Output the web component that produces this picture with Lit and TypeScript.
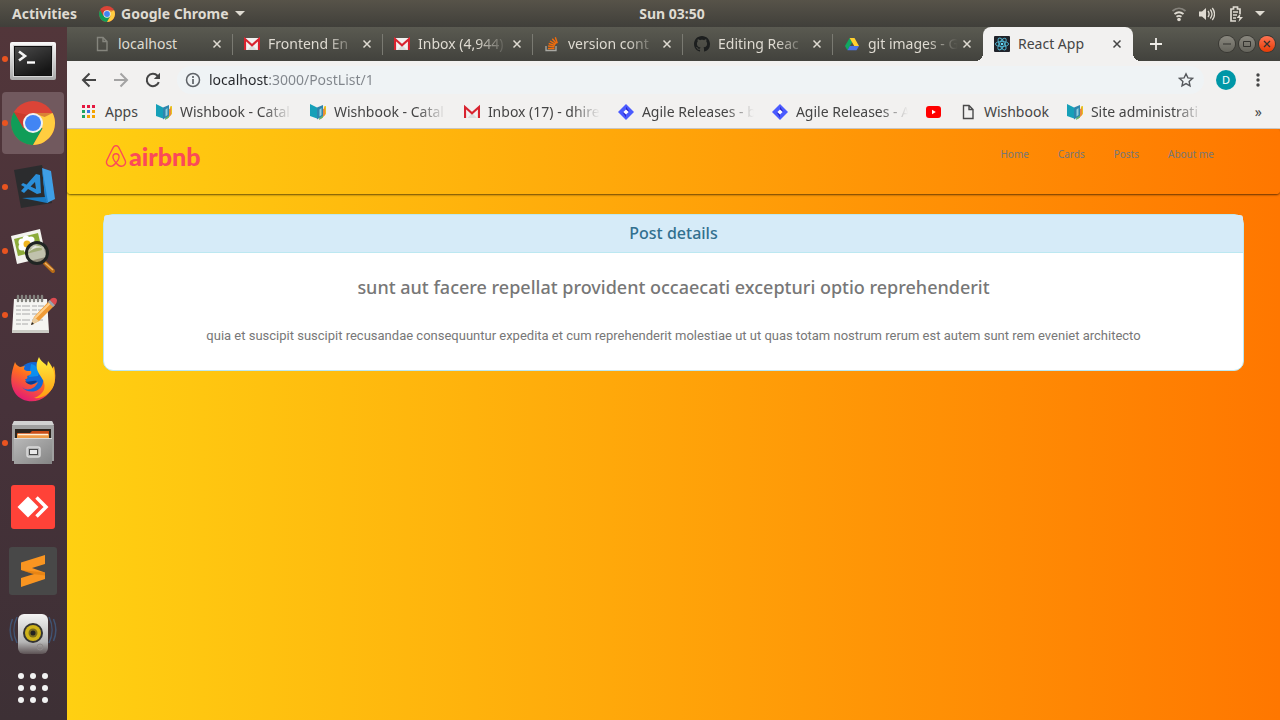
import { LitElement, html, css, svg } from "lit";
import { customElement } from "lit/decorators.js";
import { classMap } from "lit/directives/class-map.js";

const gmail = svg`<svg class="i16" viewBox="0 0 16 16"><rect x="1" y="2" width="14" height="12" rx="1" fill="#f1f1f1"/><path d="M3.500 14 8 9l5 5z" fill="#dcdcdc"/><path d="M1 14V3l7 6.200L15 3v11" fill="none" stroke="#d8232f" stroke-width="2.200"/></svg>`;
const page = (color: string) => svg`<svg class="i16" viewBox="0 0 16 16"><path d="M3.500 1.500h5.500l4 4v9H3.500zM9 1.500v4h4" fill="none" stroke="${color}" stroke-width="1.400"/></svg>`;
const stack = svg`<svg class="i16" viewBox="0 0 16 16"><path d="M2 10v4.500h10V10" fill="none" stroke="#a9a9a3" stroke-width="1.300"/><path d="M4 12.500h6.500M4.100 10l6.400.7M4.700 7.500l6.200 1.900M6 5l5.600 3.300M8.300 2.700l4.100 4.800M11.300 1.200l2 6" stroke="#f26d0c" stroke-width="1.400"/></svg>`;
const github = svg`<svg class="i16" viewBox="0 0 16 16"><path fill="#1d1f1f" d="M8 0C3.580 0 0 3.580 0 8c0 3.540 2.290 6.530 5.470 7.590.4.070.55-.17.55-.38 0-.19-.01-.82-.01-1.490-2.010.37-2.530-.49-2.690-.94-.09-.23-.48-.94-.82-1.130-.28-.15-.68-.52-.01-.53.63-.01 1.080.58 1.230.82.72 1.210 1.870.87 2.330.66.07-.52.28-.87.51-1.070-1.780-.2-3.640-.89-3.640-3.950 0-.87.31-1.590.82-2.150-.08-.2-.36-1.020.08-2.120 0 0 .67-.21 2.200.82.64-.18 1.320-.27 2-.27s1.360.09 2 .27c1.530-1.040 2.200-.82 2.200-.82.44 1.100.16 1.920.08 2.120.51.56.82 1.270.82 2.150 0 3.070-1.870 3.750-3.650 3.950.29.25.54.73.54 1.480 0 1.070-.01 1.930-.01 2.200 0 .21.15.46.55.38A8.010 8.010 0 0 0 16 8c0-4.420-3.580-8-8-8z"/></svg>`;
const drive = svg`<svg class="i16" viewBox="0 0 16 16"><path d="M5.600 2 8.200 6.300 3.400 14.200 1 10z" fill="#11a861"/><path d="M5.600 2h4.900L15 10h-4.800z" fill="#ffd02f"/><path d="M5.800 10H15l-2.500 4.200H3.400z" fill="#4a73e8"/></svg>`;
const react = svg`<svg class="i16" viewBox="0 0 16 16"><rect width="16" height="16" rx="1" fill="#20232a"/><g fill="none" stroke="#53b7d3" stroke-width=".9"><ellipse cx="8" cy="8" rx="6.600" ry="2.600"/><ellipse cx="8" cy="8" rx="6.600" ry="2.600" transform="rotate(60 8 8)"/><ellipse cx="8" cy="8" rx="6.600" ry="2.600" transform="rotate(120 8 8)"/></g><circle cx="8" cy="8" r="1.300" fill="#61dafb"/></svg>`;
const book = svg`<svg class="i16" viewBox="0 0 16 16"><path d="M14 2.500 16 2v8l-3 3z" fill="#e8c31c"/><path d="M12.500 5.500 15 4v7l-4 4z" fill="#e98b3e"/><path d="M10 8l3-2v7.500L9 16z" fill="#62b36a"/><path d="M0 0l7 3.500v11L0 12z" fill="#16a0b8"/><path d="M7 3.500 13 1v10.500l-6 4z" fill="#2f86ad"/><path d="M9.500 5.500 11.500 4v7l-2 1.500z" fill="#8fd0e0"/></svg>`;
const agile = svg`<svg class="i16" viewBox="0 0 16 16"><path d="M8 0l8 8-8 8-8-8z" fill="#4a5bff"/><path d="M8 2.500 11.500 8 8 6z" fill="#2a25c8"/><path d="M8 13.500 4.500 8 8 10z" fill="#2a25c8"/><path d="M8 5.400 10.600 8 8 10.600 5.400 8z" fill="#fff"/></svg>`;
const youtube = svg`<svg class="i16" viewBox="0 0 16 16"><rect x="0" y="2" width="15" height="12" rx="3" fill="#f00"/><path d="M6 5.700 9.800 8 6 10.300z" fill="#fff"/></svg>`;
const apps = svg`<svg class="i16" viewBox="0 0 16 16"><path fill="#e5173f" d="M1 1h3v3H1zM6 1h3v3H6zM11 1h3v3h-3z"/><path fill="#1fa463" d="M1 6h3v3H1z"/><path fill="#3b78e7" d="M6 6h3v3H6z"/><path fill="#f4a300" d="M11 6h3v3h-3zM6 11h3v3H6zM11 11h3v3h-3z"/><path fill="#1fa463" d="M1 11h3v3H1z"/></svg>`;
const chrome = (cls: string) => svg`<svg class=${cls} viewBox="0 0 44 44"><circle cx="22" cy="22" r="22" fill="#db4437"/><path d="M2.950 11A22 22 0 0 0 22 44L31.500 27.500 22 22 12.500 27.500z" fill="#109d58"/><path d="M22 44A22 22 0 0 0 41.600 12H22l9.500 15.500z" fill="#ffcd40"/><path d="M22 12h19.600l-8 4z" fill="#b5382c" opacity=".5"/><path d="M3 11l9.600 16.400L17 14z" fill="#a52714" opacity=".3"/><circle cx="22" cy="22" r="10" fill="#f1f1f1"/><circle cx="22" cy="22" r="8" fill="#4285f4"/></svg>`;
const cross = svg`<svg class="x" viewBox="0 0 10 10"><path d="M1.500 1.500l7 7M8.500 1.500l-7 7" stroke="currentColor" stroke-width="1.500"/></svg>`;

const terminal = svg`<svg class="i48" viewBox="0 0 48 48"><defs><linearGradient id="t" x2="0" y2="1"><stop stop-color="#fafafa"/><stop offset="1" stop-color="#a9a9a9"/></linearGradient><linearGradient id="s" x2=".6" y2="1"><stop stop-color="#4a4a4a"/><stop offset="1" stop-color="#161616"/></linearGradient></defs><rect x="1" y="7" width="46" height="38" rx="2" fill="url(#t)"/><rect x="4" y="10" width="40" height="32" fill="#d5d5d5"/><rect x="5" y="11" width="38" height="30" fill="#111"/><rect x="6" y="12" width="36" height="28" fill="url(#s)"/><path d="M10 16.500l6 4.500-6 4.500" fill="none" stroke="#f5f5f5" stroke-width="2.600"/><path d="M18 27.500h8" stroke="#fff" stroke-width="2.400"/></svg>`;
const vscode = svg`<svg class="i48" viewBox="0 0 48 48"><path d="M5 7l28-5 10 38-31 5z" fill="#2b2c2e"/><path d="M13 35l23-1 2 6z" fill="#1a7cc4"/><path d="M33 5l9 3 4 28-8 4-2-6z" fill="#3f9fe6"/><path d="M33 5l3 29 2 6 1-1z" fill="#1d83cf"/><path d="M27 11l4 1 1 18-4 1-16-9 2-2 13 6-1-7-11 11-3-2z" fill="#2a8fda"/></svg>`;
const viewer = svg`<svg class="i48" viewBox="0 0 48 48"><path d="M2 9l29-7 6 28-29 7z" fill="#f3f3ee"/><path d="M5 12l24-6 4 17-24 6z" fill="#8cab39"/><g fill="#fff"><circle cx="13" cy="15" r="3.500"/><circle cx="17" cy="12" r="3.500"/><circle cx="22" cy="13" r="3.500"/><circle cx="24" cy="18" r="3.500"/><circle cx="13" cy="20" r="3.500"/><circle cx="18" cy="22" r="3.500"/></g><circle cx="18" cy="17" r="3.500" fill="#efb521"/><path d="M36 36l8 8" stroke="#b76b16" stroke-width="4" stroke-linecap="round"/><path d="M36 36l8 7" stroke="#efb364" stroke-width="1.500"/><circle cx="28" cy="26" r="10.500" fill="#a9ad91" fill-opacity=".7" stroke="#202523" stroke-width="3"/><path d="M21 24c2-5 8-7 12-3-4-1-8 0-12 3z" fill="#fff" opacity=".6"/></svg>`;
const notes = svg`<svg class="i48" viewBox="0 0 48 48"><path d="M5 8h33l2 33H3z" fill="#f5f5f2"/><path d="M3 39h37v3H3z" fill="#cbcbc4"/><path d="M7 15h28M7 19h25M7 23h28M7 29h27M7 33h12" stroke="#aaa" stroke-dasharray="5 1 8 2"/><path d="M9 5v5M13 5v5M17 5v5M21 5v5M25 5v5M29 5v5M33 5v5" stroke="#84847f" stroke-width="2.400" stroke-linecap="round"/><path d="M22 34l3-8L41 9l5 5-16 16z" fill="#f09b36"/><path d="M26 27 42 11" stroke="#ffd08b" stroke-width="2"/><path d="M22 34l3-8 5 4z" fill="#e8cda0"/><path d="M22 34l1-3 2 2z" fill="#222"/><path d="M39 11l2-2 5 5-2 2z" fill="#9ba3ad"/><path d="M41 9c2-3 6-3 7 0 0 2-1 4-2 5z" fill="#dd4b51"/></svg>`;
const firefox = svg`<svg class="i48" viewBox="0 0 48 48"><defs><linearGradient id="f" x1=".8" x2=".2" y2="1"><stop stop-color="#ffbe18"/><stop offset=".45" stop-color="#ff6c22"/><stop offset="1" stop-color="#e2137c"/></linearGradient><linearGradient id="y" x2="0" y2="1"><stop stop-color="#fff03e"/><stop offset="1" stop-color="#ff9b12"/></linearGradient></defs><g transform="translate(0 2)"><circle cx="25" cy="22" r="17" fill="#1268d6"/><path d="M22 7c6 1 9 7 7 12l-9 1z" fill="#0c8ff0"/><path d="M6 5c1 3 3 4 5 5l5-1c-2 3-1 4 2 5h4c1 3-1 4-4 5 1 2 0 3-2 3 2 6 7 7 13 3-3 7-11 10-16 5 6 8 20 5 21-5L45 9c3 12 1 22-8 30-9 8-24 7-31-3C0 27 2 16 6 5z" fill="url(#f)"/><path d="M30 0c2 5 6 6 8 9l1-5c6 7 8 16 6 24-4 10-13 14-20 13 9-3 13-10 9-18-3-6-10-11-4-23z" fill="url(#y)"/><path d="M16 24c3 2 7-1 12 0-3 4-9 5-12 0z" fill="#0a3c8f"/></g></svg>`;
const files = svg`<svg class="i48" viewBox="0 0 48 48"><defs><linearGradient id="g" x2="1" y2="1"><stop stop-color="#b9b9b9"/><stop offset="1" stop-color="#858585"/></linearGradient></defs><path d="M5 2h38l2 5v35H3V7z" fill="#a0a0a0"/><path d="M5 2h38l2 4H3z" fill="#d2d2d2"/><path d="M6 10h36v12H6z" fill="#2c2520"/><path d="M8 14h13l2-2h17v9H8z" fill="#c94d18"/><path d="M8 15h32v5H8z" fill="#ef9b48"/><path d="M9 15.500h30" stroke="#fff1d9" stroke-width="1.500"/><path d="M5 19h38v26H5z" fill="url(#g)"/><path d="M5 19.500h38" stroke="#dadada"/><rect x="18" y="28" width="13" height="10" rx="2" fill="#b5b5b5" stroke="#dadada" stroke-width="1.500"/><rect x="20.500" y="30.500" width="8" height="5" fill="#e9e9e9" stroke="#4b4b4b"/></svg>`;
const anydesk = svg`<svg class="i48" viewBox="0 0 48 48"><rect x="2" y="2" width="44" height="44" rx="3" fill="#ff4238"/><path d="M19 13.500 29.500 24 19 34.500 8.500 24z" fill="#fff"/><path d="M27.500 14.500 37 24l-9.500 9.500" fill="none" stroke="#fff" stroke-width="3.500"/></svg>`;
const sublime = svg`<svg class="i48" viewBox="0 0 48 48"><rect width="48" height="48" rx="3" fill="#484848"/><path d="M12 15.500 36 8v9l-13 4 13 4.500V32l-24 8v-9l13-4-13-4z" fill="#f99521"/><path d="M12 23l24 2.500v3l-13-1.500z" fill="#d9770b" opacity=".55"/></svg>`;
const speaker = svg`<svg class="i48" viewBox="0 0 48 48"><defs><linearGradient id="p" x2="0" y2="1"><stop stop-color="#f4f4f4"/><stop offset=".7" stop-color="#b6b6b6"/><stop offset="1" stop-color="#5c5254"/></linearGradient></defs><path d="M8 6C4 14 4 24 8 32M3.500 8c-3 7-3 15 0 22M40 6c4 8 4 18 0 26M44.500 8c3 7 3 15 0 22" fill="none" stroke="#40638c" stroke-width="1.500" opacity=".7"/><rect x="9" y="3" width="30" height="40" rx="6" fill="url(#p)"/><circle cx="24" cy="22" r="10" fill="#333"/><circle cx="24" cy="22" r="8" fill="#cfb31a"/><circle cx="24" cy="22" r="4.500" fill="#7b6c1c"/><circle cx="24" cy="22" r="2.500" fill="#222"/><circle cx="31" cy="36" r="3" fill="none" stroke="#8d8888"/></svg>`;

const DOCK = [
  { name: "Terminal", icon: terminal, running: true },
  { name: "Google Chrome", icon: chrome("i44"), running: true, active: true },
  { name: "Visual Studio Code", icon: vscode, running: true },
  { name: "Image Viewer", icon: viewer, running: true },
  { name: "Text Editor", icon: notes, running: true },
  { name: "Firefox", icon: firefox },
  { name: "Files", icon: files, running: true },
  { name: "AnyDesk", icon: anydesk },
  { name: "Sublime Text", icon: sublime },
  { name: "Sound", icon: speaker },
];

const TABS = [
  { title: "localhost", icon: page("#85857d") },
  { title: "Frontend En", icon: gmail, long: true },
  { title: "Inbox (4,944)", icon: gmail, long: true },
  { title: "version cont", icon: stack, long: true },
  { title: "Editing Reac", icon: github, long: true },
  { title: "git images - G", icon: drive, long: true },
  { title: "React App", icon: react, active: true },
];

const BOOKMARKS = [
  { title: "Apps", icon: apps },
  { title: "Wishbook - Catal", icon: book, long: true },
  { title: "Wishbook - Catal", icon: book, long: true },
  { title: "Inbox (17) - dhire", icon: gmail, long: true },
  { title: "Agile Releases - b", icon: agile, long: true },
  { title: "Agile Releases - A", icon: agile, long: true },
  { title: "", icon: youtube },
  { title: "Wishbook", icon: page("#4a4a4a") },
  { title: "Site administrati", icon: book, long: true },
];

const reset = css`
  *, *::before, *::after { box-sizing: border-box; }
  button, input { font: inherit; color: inherit; background: none; border: 0; padding: 0; margin: 0; }
  a { color: inherit; text-decoration: none; }
  svg { display: block; flex: none; }
  .i16 { width: 16px; height: 16px; }
`;

@customElement("system-bar")
class SystemBar extends LitElement {
  static styles = [reset, css`
    :host { display: grid; grid-template-columns: 10fr auto 9fr; align-items: center; height: 27px;
      background: linear-gradient(#575349, #403f3a); color: #dfdbd2; font-size: 14px; font-weight: 700; line-height: 20px; }
    .left, .app, .right { display: flex; align-items: center; }
    .left { padding-left: 12px; gap: 22px; }
    .app { gap: 6px; }
    .right { justify-content: flex-end; padding-right: 15px; gap: 12px; }
    .caret { width: 10px; height: 5px; }
  `];
  render() {
    return html`
      <div class="left"><button>Activities</button>
        <button class="app">${chrome("i16")}<span>Google Chrome</span><svg class="caret" viewBox="0 0 10 5"><path d="M0 0h10L5 5z" fill="currentColor"/></svg></button></div>
      <time>Sun 03:50</time>
      <button class="right" aria-label="System menu">
        <svg class="i16" viewBox="0 0 16 16" fill="none"><path d="M1.500 5c4-3.500 9-3.500 13 0" stroke="#85827b" stroke-width="1.800"/><path d="M3.500 8c3-2.300 6-2.300 9 0M5.500 10.800c1.700-1.200 3.300-1.200 5 0" stroke="#dfdbd2" stroke-width="1.800"/><circle cx="8" cy="13.500" r="1.800" fill="#dfdbd2"/></svg>
        <svg class="i16" viewBox="0 0 16 16" fill="none"><path d="M0 5.500h3L7 2v12l-4-3.500H0z" fill="#dfdbd2"/><path d="M9 5c1.500 2 1.500 4 0 6M11.300 3.500c2.300 3 2.300 6 0 9M13.300 2c3 4 3 8 0 12" stroke="#dfdbd2" stroke-width="1.300"/></svg>
        <svg class="i16" viewBox="0 0 16 16" fill="none"><path d="M9 15H4V3h2.500V1h4v2H13v5" stroke="#dfdbd2" stroke-width="1.700"/><path d="M6 6h5M6 9h4M6 12h3" stroke="#dfdbd2" stroke-width="1.500"/><path d="M13.500 7.500 9.500 12h3l-1 4 4.500-5h-3z" fill="#dfdbd2"/></svg>
        <svg class="caret" viewBox="0 0 10 5"><path d="M0 0h10L5 5z" fill="currentColor"/></svg>
      </button>`;
  }
}

@customElement("app-dock")
class AppDock extends LitElement {
  static styles = [reset, css`
    :host { display: flex; flex-direction: column; align-items: center; gap: 2px; padding: 1px 3px 1px 2px;
      width: 67px; background: linear-gradient(#52363a, #47323a 55%, #3d3035); }
    .item { position: relative; display: grid; place-items: center; width: 62px; height: 62px; border-radius: 4px; flex: none; }
    .active { background: #71595e; }
    .running::before { content: ""; position: absolute; left: 0; top: 28px; width: 6px; height: 6px; border-radius: 50%; background: #e95420; }
    .i48 { width: 48px; height: 48px; }
    .i44 { width: 44px; height: 44px; }
    .grid { width: 62px; height: 40px; display: grid; place-items: center; }
    .dots { width: 30px; height: 30px; }
  `];
  render() {
    return html`
      ${DOCK.map(d => html`<button aria-label=${d.name} class=${classMap({ item: true, running: !!d.running, active: !!d.active })}>${d.icon}</button>`)}
      <button class="grid" aria-label="Show applications"><svg class="dots" viewBox="0 0 30 30" fill="#f2f2f2">
        ${[3, 15, 27].map(y => [3, 15, 27].map(x => svg`<circle cx=${x} cy=${y} r="3"/>`))}</svg></button>`;
  }
}

@customElement("tab-strip")
class TabStrip extends LitElement {
  static styles = [reset, css`
    :host { display: flex; align-items: center; height: 34px; padding: 0 5px 0 16px;
      background: linear-gradient(#5a5a51, #42423d); color: #dfdbd2; font-size: 14px; line-height: 20px; }
    .tab { position: relative; display: flex; align-items: center; flex: 0 1 150px; min-width: 0; height: 34px; padding: 0 11px; gap: 4px; }
    .tab::after { content: ""; position: absolute; right: 0; top: 7px; height: 21px; width: 1px; background: #7a7a72; }
    .last::after { display: none; }
    .pick { display: flex; align-items: center; gap: 8px; flex: 1; min-width: 0; text-align: left; }
    .title { flex: 1; overflow: hidden; white-space: nowrap; }
    .fade { mask-image: linear-gradient(90deg, #000 65%, transparent); }
    .active { background: #f2f1f0; color: #454545; border-radius: 8px 8px 0 0; }
    .active::after { display: none; }
    .active::before { content: ""; position: absolute; left: -8px; right: -8px; bottom: 0; height: 8px;
      background: radial-gradient(circle at 0 0, transparent 8px, #f2f1f0 8px) left / 8px 8px no-repeat,
        radial-gradient(circle at 100% 0, transparent 8px, #f2f1f0 8px) right / 8px 8px no-repeat; }
    .x { width: 10px; height: 10px; }
    .new { margin-left: 17px; }
    .plus { width: 12px; height: 12px; }
    .win { display: flex; gap: 4px; margin-left: auto; }
    .ctl { width: 16px; height: 16px; border-radius: 50%; display: grid; place-items: center; background: linear-gradient(#8a887f, #65645c); color: #33322e; box-shadow: 0 0 0 1px #3a3934; }
    .close { background: linear-gradient(#ff7352, #e63b05); }
    .g { width: 8px; height: 8px; }
  `];
  render() {
    return html`
      ${TABS.map((t, i) => html`<div class=${classMap({ tab: true, active: !!t.active, last: i === TABS.length - 2 })}>
        <button class="pick">${t.icon}<span class=${classMap({ title: true, fade: !!t.long })}>${t.title}</span></button>
        <button aria-label="Close tab">${cross}</button></div>`)}
      <button class="new" aria-label="New tab"><svg class="plus" viewBox="0 0 12 12"><path d="M6 0v12M0 6h12" stroke="#efede8" stroke-width="1.800"/></svg></button>
      <div class="win">
        <button class="ctl" aria-label="Minimize"><svg class="g" viewBox="0 0 8 8"><path d="M0 4h8" stroke="currentColor"/></svg></button>
        <button class="ctl" aria-label="Maximize"><svg class="g" viewBox="0 0 8 8"><path d="M.5 1.500h7v5h-7z" fill="none" stroke="currentColor"/></svg></button>
        <button class="ctl close" aria-label="Close window"><svg class="g" viewBox="0 0 8 8"><path d="M1 1l6 6M7 1 1 7" stroke="currentColor" stroke-width="1.300"/></svg></button>
      </div>`;
  }
}

@customElement("browser-bar")
class BrowserBar extends LitElement {
  static styles = [reset, css`
    :host { display: block; background: #f2f1f0; color: #454545; border-bottom: 1px solid #cfccc9; }
    .tools { display: flex; align-items: center; height: 37px; padding: 0 14px; gap: 16px; }
    .omni { display: flex; align-items: center; flex: 1; height: 28px; border-radius: 14px; background: #eff3f5; padding: 0 10px 0 8px; gap: 8px; }
    .url { flex: 1; min-width: 0; font-size: 14px; line-height: 20px; height: 20px; outline: 0; color: transparent;
      background: linear-gradient(90deg, #25272b 59px, #80858b 59px); -webkit-background-clip: text; background-clip: text; }
    .me { width: 20px; height: 20px; margin: 0 -2px 0 -4px; border-radius: 50%; background: #0097a7; color: #fff; font-size: 11px; line-height: 20px; }
    .marks { display: flex; align-items: center; height: 30px; padding: 0 18px 2px 14px; gap: 18px; font-size: 14px; line-height: 20px; }
    .mark { display: flex; align-items: center; gap: 8px; }
    .label { white-space: nowrap; }
    .fade { width: 112px; overflow: hidden; mask-image: linear-gradient(90deg, #000 75%, transparent); }
    .more { margin-left: auto; }
  `];
  render() {
    return html`
      <div class="tools">
        <button aria-label="Back"><svg class="i16" viewBox="0 0 16 16" fill="none" stroke="#454545" stroke-width="2"><path d="M15 8H2M8.500 1.500 2 8l6.500 6.500"/></svg></button>
        <button aria-label="Forward"><svg class="i16" viewBox="0 0 16 16" fill="none" stroke="#a3a3a3" stroke-width="2"><path d="M1 8h13M7.500 1.500 14 8l-6.500 6.500"/></svg></button>
        <button aria-label="Reload"><svg class="i16" viewBox="0 0 16 16"><path d="M13.800 10.200A6.200 6.200 0 1 1 12.500 3.700L14 5.200" fill="none" stroke="#454545" stroke-width="2"/><path d="M15 .8V7H8.800z" fill="#454545"/></svg></button>
        <div class="omni">
          <svg class="i16" viewBox="0 0 16 16"><circle cx="8" cy="8" r="6.500" fill="none" stroke="#5f6368" stroke-width="1.500"/><path d="M8 7v5M8 4v2" stroke="#5f6368" stroke-width="1.700"/></svg>
          <input class="url" aria-label="Address" value="localhost:3000/PostList/1">
          <button aria-label="Bookmark this page"><svg class="i16" viewBox="0 0 16 16"><path d="M8 1.800l1.900 4.100 4.500.5-3.300 3 .9 4.500L8 11.600l-4 2.300.9-4.500-3.300-3 4.500-.5z" fill="none" stroke="#55585c" stroke-width="1.400"/></svg></button>
        </div>
        <button class="me" aria-label="Profile">D</button>
        <button aria-label="Menu"><svg class="i16" viewBox="0 0 16 16" fill="#454545"><circle cx="8" cy="3" r="1.700"/><circle cx="8" cy="8" r="1.700"/><circle cx="8" cy="13" r="1.700"/></svg></button>
      </div>
      <nav class="marks" aria-label="Bookmarks">
        ${BOOKMARKS.map(b => html`<a class="mark" href="#" aria-label=${b.title || "YouTube"}>${b.icon}${b.title ? html`<span class=${classMap({ label: true, fade: !!b.long })}>${b.title}</span>` : ""}</a>`)}
        <button class="more" aria-label="More bookmarks">»</button>
      </nav>`;
  }
}

@customElement("post-page")
class PostPage extends LitElement {
  static styles = [reset, css`
    :host { display: block; flex: 1; background: linear-gradient(90deg, #ffd012, #ff7700); color: #777; }
    .top { display: flex; justify-content: space-between; align-items: flex-start; height: 65px; padding: 15px 66px 0 38px;
      border-radius: 4px; box-shadow: 0 1px 2px rgba(0, 0, 0, .6); margin-bottom: 20px; background: linear-gradient(90deg, #ffd012, #ff7700); }
    .brand { display: flex; align-items: center; gap: 2px; color: #fb4a59; font-family: Lato, sans-serif; font-size: 25px; font-weight: 900; line-height: 24px; }
    .belo { width: 22px; height: 22px; }
    .nav { display: flex; gap: 29px; font-size: 10px; line-height: 20px; }
    .card { width: 94%; margin: 0 auto; background: #fff; border: 1px solid #bce8f1; border-radius: 10px; text-align: center; }
    .head { margin: 0; padding: 8px 15px; border-bottom: 1px solid #bce8f1; border-radius: 3px 3px 0 0; background: #d6ebf8; color: #31708f; font-size: 16px; font-weight: 500; line-height: 21px; }
    .body { padding: 22px 15px; }
    .title { margin: 0; font-size: 18px; font-weight: 500; line-height: 24px; }
    .text { margin: 25px 0 0; font-family: Roboto, sans-serif; font-size: 13px; line-height: 24px; }
  `];
  render() {
    return html`
      <header class="top">
        <a class="brand" href="#"><svg class="belo" viewBox="0 0 24 24" fill="currentColor"><path d="M12.001 18.275c-1.353-1.697-2.148-3.184-2.413-4.457-.263-1.027-.16-1.848.291-2.465.477-.71 1.188-1.056 2.121-1.056s1.643.345 2.120 1.063c.446.61.558 1.432.286 2.465-.291 1.298-1.085 2.785-2.412 4.458zm9.601 1.140c-.185 1.246-1.034 2.280-2.200 2.783-2.253.98-4.483-.583-6.392-2.704 3.157-3.951 3.740-7.028 2.385-9.018-.795-1.140-1.933-1.695-3.394-1.695-2.944 0-4.563 2.490-3.927 5.382.37 1.565 1.352 3.343 2.917 5.332-.98 1.085-1.910 1.856-2.732 2.333-.636.344-1.245.558-1.828.609-2.679.399-4.778-2.200-3.825-4.880.132-.345.395-.98.845-1.961l.025-.053c1.464-3.178 3.242-6.790 5.285-10.795l.053-.132.58-1.116c.45-.822.635-1.190 1.351-1.643.346-.21.77-.315 1.246-.315.954 0 1.698.558 2.016 1.007.158.239.345.557.582.953l.558 1.089.08.159c2.041 4.004 3.821 7.608 5.279 10.794l.026.025.533 1.220.318.764c.243.613.294 1.222.213 1.858zm1.220-2.390c-.186-.583-.505-1.271-.9-2.094v-.03c-1.889-4.006-3.642-7.608-5.307-10.844l-.111-.163C15.317 1.461 14.468 0 12.001 0c-2.440 0-3.476 1.695-4.535 3.898l-.081.16c-1.669 3.236-3.421 6.843-5.303 10.847v.053l-.559 1.220c-.21.504-.317.768-.345.847C-.172 20.740 2.611 24 5.980 24c.027 0 .132 0 .265-.027h.372c1.750-.213 3.554-1.325 5.384-3.317 1.829 1.989 3.635 3.104 5.382 3.317h.372c.133.027.239.027.265.027 3.370.003 6.152-3.261 4.802-6.975z"/></svg><span>airbnb</span></a>
        <nav class="nav"><a href="#">Home</a><a href="#">Cards</a><a href="#">Posts</a><a href="#">About me</a></nav>
      </header>
      <article class="card">
        <h3 class="head">Post details</h3>
        <div class="body">
          <h4 class="title">sunt aut facere repellat provident occaecati excepturi optio reprehenderit</h4>
          <p class="text">quia et suscipit suscipit recusandae consequuntur expedita et cum reprehenderit molestiae ut ut quas totam nostrum rerum est autem sunt rem eveniet architecto</p>
        </div>
      </article>`;
  }
}

@customElement("app-root")
class AppRoot extends LitElement {
  static styles = [reset, css`
    :host { display: flex; flex-direction: column; min-height: 100vh; font-family: "Noto Sans", "Open Sans", sans-serif; }
    .desk { display: flex; flex: 1; }
    .window { display: flex; flex-direction: column; flex: 1; min-width: 0; }
  `];
  render() {
    return html`<system-bar></system-bar>
      <div class="desk"><app-dock></app-dock>
        <main class="window"><tab-strip></tab-strip><browser-bar></browser-bar><post-page></post-page></main></div>`;
  }
}
